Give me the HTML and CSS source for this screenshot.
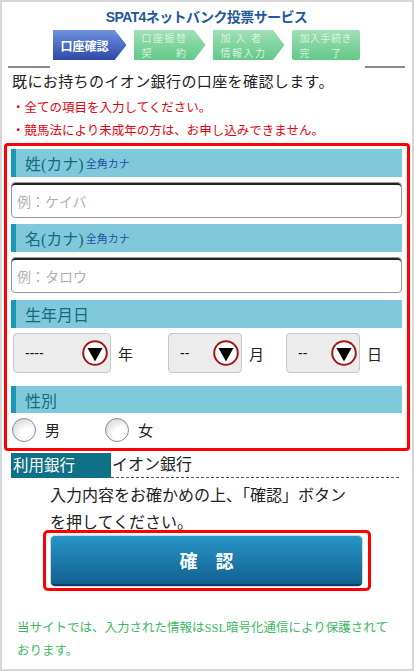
FILE: index.html
```html
<!DOCTYPE html>
<html lang="ja">
<head>
    <meta charset="UTF-8">
    <meta name="viewport" content="width=device-width, initial-scale=1.0">
    <title>SPAT4ネットバンク投票サービス</title>
    <link rel="stylesheet" href="styles.css">
</head>
<body>
    <div class="page">
        <div class="head">
            <div class="logo">
                <div class="site-title">SPAT4ネットバンク投票サービス</div>
                <div class="steps">
                    <div class="step current">口座確認</div>
                    <div class="step"><span>口座振替</span><span>契　　約</span></div>
                    <div class="step"><span>加 入 者</span><span>情報入力</span></div>
                    <div class="step last"><span>加入手続き</span><span>完　　了</span></div>
                </div>
            </div>
        </div>

        <p class="intro">既にお持ちのイオン銀行の口座を確認します。</p>
        <ul class="notes">
            <li>・全ての項目を入力してください。</li>
            <li>・競馬法により未成年の方は、お申し込みできません。</li>
        </ul>

        <div class="form-box">
            <div class="field-head">姓(カナ)<small>全角カナ</small></div>
            <input type="text" class="text-input" placeholder="例：ケイバ">

            <div class="field-head gap">名(カナ)<small>全角カナ</small></div>
            <input type="text" class="text-input" placeholder="例：タロウ">

            <div class="field-head gap-lg">生年月日</div>
            <div class="date-row">
                <div class="date-group year">
                    <div class="select w-year"><span>----</span>
                        <svg width="26" height="26" viewBox="0 0 26 26"><circle cx="13" cy="13" r="11.8" fill="#fff" stroke="#a01818" stroke-width="2"/><polygon points="5.5,8 20.5,8 13,21.5" fill="#000"/></svg>
                    </div>
                    <span class="unit">年</span>
                </div>
                <div class="date-group month">
                    <div class="select w-md"><span>--</span>
                        <svg width="26" height="26" viewBox="0 0 26 26"><circle cx="13" cy="13" r="11.8" fill="#fff" stroke="#a01818" stroke-width="2"/><polygon points="5.5,8 20.5,8 13,21.5" fill="#000"/></svg>
                    </div>
                    <span class="unit">月</span>
                </div>
                <div class="date-group day">
                    <div class="select w-md"><span>--</span>
                        <svg width="26" height="26" viewBox="0 0 26 26"><circle cx="13" cy="13" r="11.8" fill="#fff" stroke="#a01818" stroke-width="2"/><polygon points="5.5,8 20.5,8 13,21.5" fill="#000"/></svg>
                    </div>
                    <span class="unit">日</span>
                </div>
            </div>

            <div class="field-head gap-xl">性別</div>
            <div class="radio-row">
                <label class="radio"><span class="dot"></span>男</label>
                <label class="radio second"><span class="dot"></span>女</label>
            </div>
        </div>

        <div class="bank-row">
            <div class="bank-label">利用銀行</div>
            <div class="bank-value">イオン銀行</div>
        </div>

        <p class="confirm-text">入力内容をお確かめの上、「確認」ボタン<br>を押してください。</p>

        <div class="button-wrap">
            <button class="confirm-btn">確　認</button>
        </div>

        <p class="ssl-note">当サイトでは、入力された情報はSSL暗号化通信により保護されております。</p>
    </div>
</body>
</html>
```

FILE: styles.css
```css
body {
    margin: 0;
    font-family: "Liberation Serif", "Noto Sans CJK JP", serif;
    color: #222;
    background: #fff;
}
.page {
    width: 414px;
    height: 671px;
    box-sizing: border-box;
    border: 2px solid #d6d6d6;
    overflow: hidden;
}
.head {
    margin: 0 7px 0 6px;
    padding-bottom: 8px;
    background:
        linear-gradient(#8a8a8a, #8a8a8a) left bottom / 42px 2px no-repeat,
        linear-gradient(#8a8a8a, #8a8a8a) right bottom / 40px 2px no-repeat;
}
.logo {
    width: 320px;
    margin: 0 auto;
    padding-top: 6px;
}
.site-title {
    font-family: "Liberation Sans", "Noto Sans CJK JP", sans-serif;
    font-weight: bold;
    font-size: 14px;
    line-height: 18px;
    letter-spacing: -0.6px;
    color: #23589a;
    text-align: center;
}
.steps {
    display: flex;
    margin-top: 4px;
    padding-left: 6px;
    gap: 7px;
}
.step {
    width: 72px;
    height: 30px;
    display: flex;
    flex-direction: column;
    justify-content: center;
    padding-left: 8px;
    box-sizing: border-box;
    font-family: "Noto Sans CJK JP", sans-serif;
    font-size: 10px;
    line-height: 15px;
    color: #d6f3df;
    background: linear-gradient(#9fe0b6, #63c888);
    clip-path: polygon(0 0, 84% 0, 100% 50%, 84% 100%, 0 100%);
}
.step span {
    letter-spacing: 1.5px;
}
.step.current {
    width: 74px;
    font-size: 12px;
    font-weight: bold;
    color: #fff;
    background: linear-gradient(#6e92e0, #2c4aa6);
}
.step.last {
    width: 68px;
    clip-path: none;
    border-radius: 2px;
}
.step.last span {
    letter-spacing: 0.5px;
}
.intro {
    margin: 4px 0 0 10px;
    font-size: 15px;
    line-height: 20px;
    letter-spacing: 0.4px;
}
.notes {
    list-style: none;
    margin: 5px 0 0 10px;
    padding: 0;
    color: #e60012;
    font-size: 12.5px;
    line-height: 23px;
}
.form-box {
    margin: 0 2px;
    border: 3px solid #f00;
    border-radius: 4px;
    padding: 3px 5px 0 4px;
    box-sizing: border-box;
    height: 308px;
}
.field-head {
    height: 28px;
    display: flex;
    align-items: center;
    padding-left: 9px;
    border-left: 5px solid #1b98b6;
    background: #80c9db;
    color: #126b80;
    font-size: 16px;
}
.field-head small {
    margin-left: 2px;
    font-size: 11px;
    color: #1f4fa0;
}
.field-head.gap {
    margin-top: 6px;
}
.field-head.gap-lg {
    margin-top: 7px;
}
.field-head.gap-xl {
    margin-top: 13px;
    height: 27px;
}
.text-input {
    display: block;
    width: 100%;
    height: 36px;
    margin-top: 5px;
    box-sizing: border-box;
    border: 1px solid #9a9a9a;
    border-radius: 4px;
    box-shadow: inset 0 2px 0 #222;
    padding: 2px 0 0 5px;
    font-family: "Noto Sans CJK JP", sans-serif;
    font-size: 14px;
}
.text-input::placeholder {
    color: #b0b0b0;
}
.date-row {
    display: flex;
    align-items: center;
    height: 40px;
    margin-top: 5px;
}
.date-group {
    display: flex;
    align-items: center;
}
.date-group.year {
    margin-left: 2px;
}
.date-group.month {
    margin-left: 35px;
}
.date-group.day {
    margin-left: 22px;
}
.select {
    height: 40px;
    box-sizing: border-box;
    display: flex;
    align-items: center;
    justify-content: space-between;
    padding: 0 2px 0 11px;
    background: #ececec;
    border: 1px solid #c8c8c8;
    border-radius: 4px;
    font-family: "Liberation Sans", sans-serif;
    font-size: 14px;
    color: #111;
}
.w-year {
    width: 98px;
}
.w-md {
    width: 74px;
}
.unit {
    margin-left: 7px;
    font-family: "Noto Sans CJK JP", sans-serif;
    font-size: 15px;
}
.radio-row {
    display: flex;
    align-items: center;
    height: 33px;
}
.radio {
    display: flex;
    align-items: center;
    gap: 9px;
    margin-left: 1px;
    font-family: "Noto Sans CJK JP", sans-serif;
    font-size: 15px;
}
.radio.second {
    margin-left: 45px;
}
.dot {
    width: 24px;
    height: 24px;
    box-sizing: border-box;
    border-radius: 50%;
    border: 1px solid #8c8c8c;
    background: radial-gradient(circle at 65% 70%, #fff 30%, #c9c9c9 100%);
}
.bank-row {
    display: flex;
    height: 25px;
    margin: 2px 13px 0 9px;
}
.bank-label {
    width: 100px;
    padding-left: 2px;
    box-sizing: border-box;
    background: #0f7186;
    color: #fff;
    font-size: 15.5px;
    line-height: 25px;
}
.bank-value {
    flex: 1;
    padding-left: 1px;
    border-bottom: 1px dashed #555;
    font-size: 16px;
    line-height: 24px;
}
.confirm-text {
    margin: 4px 0 0 48px;
    font-size: 16px;
    line-height: 27px;
}
.button-wrap {
    width: 328px;
    box-sizing: border-box;
    margin: -6px 0 0 41px;
    padding: 3px 6px 2px 5px;
    border: 3px solid #f00;
    border-radius: 5px;
}
.confirm-btn {
    display: block;
    width: 100%;
    height: 50px;
    border: none;
    border-bottom: 2px solid #0b3f66;
    border-radius: 4px;
    background: linear-gradient(#2796c6, #13608f);
    box-shadow: 0 0 0 1px #cfd8de;
    color: #fff;
    font-family: "Noto Sans CJK JP", sans-serif;
    font-weight: bold;
    font-size: 18px;
    cursor: pointer;
}
.ssl-note {
    margin: 26px 22px 0 15px;
    color: #3db865;
    font-size: 12.5px;
    line-height: 23px;
}
```
